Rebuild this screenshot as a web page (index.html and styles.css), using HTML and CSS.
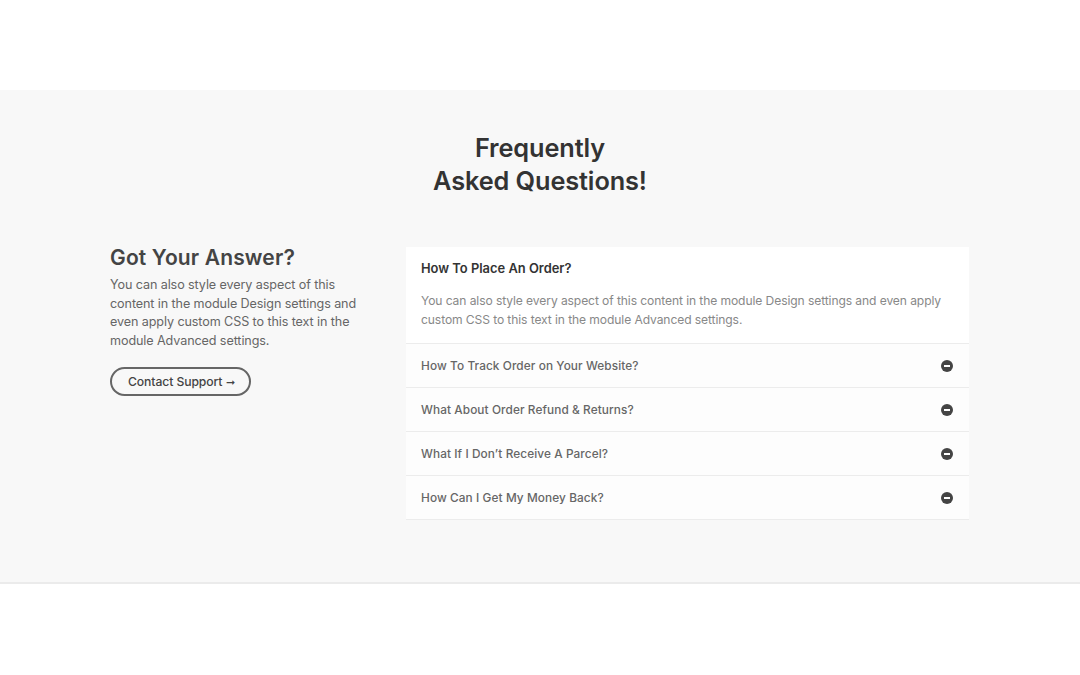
FILE: index.html
```html
<!DOCTYPE html>
<html>
<head>
<meta charset="utf-8">
<link rel="stylesheet" href="styles.css">
</head>
<body>
<div class="top"></div>
<section class="faq">
  <h1 class="title">Frequently<br>Asked Questions!</h1>
  <div class="cols">
    <div class="left">
      <h2 class="left-h">Got Your Answer?</h2>
      <p class="left-p">You can also style every aspect of this content in the module Design settings and even apply custom CSS to this text in the module Advanced settings.</p>
      <a class="btn">Contact Support <span class="arrow">&#10142;</span></a>
    </div>
    <div class="acc">
      <div class="item open">
        <div class="q-open">How To Place An Order?</div>
        <p class="ans">You can also style every aspect of this content in the module Design settings and even apply custom CSS to this text in the module Advanced settings.</p>
      </div>
      <div class="item">
        <span class="q">How To Track Order on Your Website?</span>
        <span class="ic"></span>
      </div>
      <div class="item">
        <span class="q">What About Order Refund &amp; Returns?</span>
        <span class="ic"></span>
      </div>
      <div class="item">
        <span class="q">What If I Don’t Receive A Parcel?</span>
        <span class="ic"></span>
      </div>
      <div class="item">
        <span class="q">How Can I Get My Money Back?</span>
        <span class="ic"></span>
      </div>
    </div>
  </div>
</section>
<div class="bottom"></div>
</body>
</html>
```
FILE: styles.css
```css
* { box-sizing: border-box; }
html, body { margin: 0; padding: 0; background: #fff; }
body { font-family: Inter, "Noto Sans", sans-serif; width: 1080px; height: 675px; overflow: hidden; }
.top { height: 90px; background: #fff; }
.faq {
  background: #f8f8f8;
  height: 494px;
  border-bottom: 2px solid #ebebeb;
  padding-top: 41px;
}
.title {
  margin: 0;
  text-align: center;
  font-size: 25.3px;
  line-height: 33px;
  font-weight: 600;
  color: #333;
  letter-spacing: -0.1px;
}
.cols {
  display: flex;
  margin-top: 50px;
  padding-left: 110px;
}
.left { width: 296px; padding-right: 30px; }
.left-h {
  margin: -2px 0 0;
  font-size: 21px;
  line-height: 25px;
  font-weight: 600;
  color: #444;
  letter-spacing: 0.15px;
}
.left-p {
  margin: 6px 0 0;
  font-size: 12.6px;
  line-height: 18.5px;
  color: #666;
  letter-spacing: -0.1px;
}
.btn {
  display: inline-flex;
  align-items: center;
  gap: 4px;
  margin-top: 17px;
  height: 29px;
  padding: 0 14px 0 16px;
  border: 2px solid #666;
  border-radius: 15px;
  font-size: 12.2px;
  color: #444;
  font-weight: 500;
  letter-spacing: -0.1px;
}
.arrow { font-size: 11px; color: #444; }
.acc { width: 563px; }
.item {
  background: #fdfdfd;
  border-bottom: 1.5px solid #ececec;
  height: 44px;
  display: flex;
  align-items: center;
  justify-content: space-between;
  padding: 0 16px 0 15px;
}
.item.open {
  display: block;
  height: 97px;
  background: #fff;
  padding: 13px 16px 0 15px;
}
.q-open {
  font-size: 12.9px;
  font-weight: 600;
  color: #333;
  line-height: 18px;
}
.ans {
  margin: 14px 0 0;
  font-size: 12.1px;
  line-height: 18.5px;
  color: #888;
  letter-spacing: -0.1px;
}
.q {
  font-size: 11.8px;
  color: #666;
  font-weight: 500;
  letter-spacing: 0.1px;
}
.ic {
  width: 12px;
  height: 12px;
  border-radius: 50%;
  background: #444;
  position: relative;
}
.ic::after {
  content: "";
  position: absolute;
  left: 3px;
  top: 5px;
  width: 6px;
  height: 2px;
  background: #fff;
}
.bottom { background: #fff; }
```
